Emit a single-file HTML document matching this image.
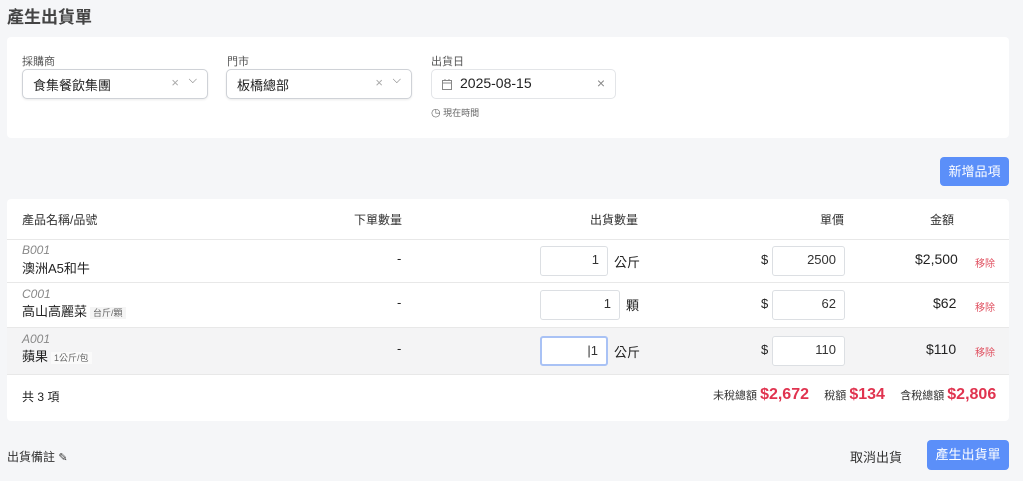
<!DOCTYPE html><html><head><meta charset="utf-8"><style>
*{box-sizing:border-box;margin:0;padding:0}
body{width:1023px;height:481px;background:#f5f6f8;font-family:"Liberation Sans","Noto Sans CJK TC",sans-serif;color:#222;position:relative;overflow:hidden;font-size:13px}
.a{position:absolute}
.card{position:absolute;background:#fff;border-radius:4px}
.lbl{font-size:11px;color:#555}
.sel{position:absolute;height:30px;border:1px solid #cfd2d7;border-radius:5px;background:#fff;font-size:13px;padding:5px 10px;box-shadow:0 1px 2px rgba(0,0,0,.08)}
.inp{position:absolute;height:30px;border:1px solid #dcdfe3;border-radius:3px;background:#fff;text-align:right;padding:5px 8px;font-size:13px;color:#333}
.btn{position:absolute;background:#5b8ff9;color:#fff;border-radius:4px;font-size:13px;text-align:center}
.row{position:absolute;left:7px;width:1002px;border-top:1px solid #e8e8e8}
.code{font-style:italic;color:#888;font-size:12px}
.tag{font-size:9px;color:#666;background:#f5f5f5;padding:1px 3px;margin-left:3px}
.rm{position:absolute;left:975px;font-size:10px;color:#e05060}
.red{color:#e0334f;font-size:16px;font-weight:bold}
</style></head><body>
<div class="a" style="left:7px;top:3px;font-size:17px;font-weight:bold;color:#444">產生出貨單</div>
<div class="card" style="left:7px;top:37px;width:1002px;height:101px"></div>
<div class="a lbl" style="left:22px;top:53px">採購商</div>
<div class="sel" style="left:22px;top:69px;width:186px">食集餐飲集團<span class="a" style="right:28px;top:5px;color:#aaa">×</span><span class="a" style="right:10px;top:4px;color:#666;font-size:11px">⌵</span></div>
<div class="a lbl" style="left:227px;top:53px">門市</div>
<div class="sel" style="left:226px;top:69px;width:186px">板橋總部<span class="a" style="right:28px;top:5px;color:#aaa">×</span><span class="a" style="right:10px;top:4px;color:#666;font-size:11px">⌵</span></div>
<div class="a lbl" style="left:431px;top:53px">出貨日</div>
<div class="sel" style="left:431px;top:69px;width:185px;border-color:#e3e5e8;box-shadow:none;font-size:14px"><svg class="a" style="left:10px;top:9px" width="10" height="11" viewBox="0 0 10 11"><rect x=".5" y="1.5" width="9" height="9" fill="none" stroke="#888"/><path d="M0 4h10M3 0v2M7 0v2" stroke="#888"/></svg><span style="margin-left:18px">2025-08-15</span><span class="a" style="right:10px;top:5px;color:#888">×</span></div>
<div class="a" style="left:431px;top:106px;font-size:9px;color:#666"><span style="font-size:11px">◷</span> 現在時間</div>
<div class="btn" style="left:940px;top:157px;width:69px;height:29px;line-height:29px">新增品項</div>
<div class="card" style="left:7px;top:199px;width:1002px;height:222px"></div>
<div class="a" style="left:22px;top:211px;font-size:12px;color:#333">產品名稱/品號</div>
<div class="a" style="left:354px;top:211px;font-size:12px;color:#333">下單數量</div>
<div class="a" style="left:590px;top:211px;font-size:12px;color:#333">出貨數量</div>
<div class="a" style="left:820px;top:211px;font-size:12px;color:#333">單價</div>
<div class="a" style="left:930px;top:211px;font-size:12px;color:#333">金額</div>
<div class="row" style="top:239px;height:43px"></div>
<div class="row" style="top:282px;height:45px"></div>
<div class="row" style="top:327px;height:47px;background:#f4f4f5"></div>
<div class="row" style="top:374px;height:1px"></div>
<div class="a code" style="left:22px;top:243px">B001</div><div class="a" style="left:22px;top:258px">澳洲A5和牛</div>
<div class="a" style="left:397px;top:251px">-</div>
<div class="inp" style="left:540px;top:246px;width:68px">1</div><div class="a" style="left:614px;top:252px">公斤</div>
<div class="a" style="left:761px;top:252px">$</div><div class="inp" style="left:772px;top:246px;width:73px">2500</div>
<div class="a" style="left:915px;top:251px;font-size:14px">$2,500</div><div class="rm" style="top:255px">移除</div>
<div class="a code" style="left:22px;top:287px">C001</div><div class="a" style="left:22px;top:301px">高山高麗菜<span class="tag">台斤/顆</span></div>
<div class="a" style="left:397px;top:295px">-</div>
<div class="inp" style="left:540px;top:290px;width:80px">1</div><div class="a" style="left:626px;top:295px">顆</div>
<div class="a" style="left:761px;top:296px">$</div><div class="inp" style="left:772px;top:290px;width:73px">62</div>
<div class="a" style="left:933px;top:295px;font-size:14px">$62</div><div class="rm" style="top:299px">移除</div>
<div class="a code" style="left:22px;top:332px">A001</div><div class="a" style="left:22px;top:346px">蘋果<span class="tag" style="background:#fafafa">1公斤/包</span></div>
<div class="a" style="left:397px;top:341px">-</div>
<div class="inp" style="left:540px;top:336px;width:68px;border:2px solid #a9c2f5">|1</div><div class="a" style="left:614px;top:342px">公斤</div>
<div class="a" style="left:761px;top:342px">$</div><div class="inp" style="left:772px;top:336px;width:73px">110</div>
<div class="a" style="left:926px;top:341px;font-size:14px">$110</div><div class="rm" style="top:344px">移除</div>
<div class="a" style="left:22px;top:388px;font-size:12px">共 3 項</div>
<div class="a" style="left:713px;top:386px;font-size:11px;color:#333">未稅總額 <span class="red">$2,672</span>&nbsp;&nbsp;&nbsp;&nbsp;&nbsp;稅額 <span class="red">$134</span>&nbsp;&nbsp;&nbsp;&nbsp;&nbsp;含稅總額 <span class="red">$2,806</span></div>
<div class="a" style="left:7px;top:448px;font-size:12px;color:#333">出貨備註 <span style="font-size:11px">✎</span></div>
<div class="a" style="left:850px;top:447px;font-size:13px;color:#333">取消出貨</div>
<div class="btn" style="left:927px;top:440px;width:82px;height:30px;line-height:30px">產生出貨單</div>
</body></html>
